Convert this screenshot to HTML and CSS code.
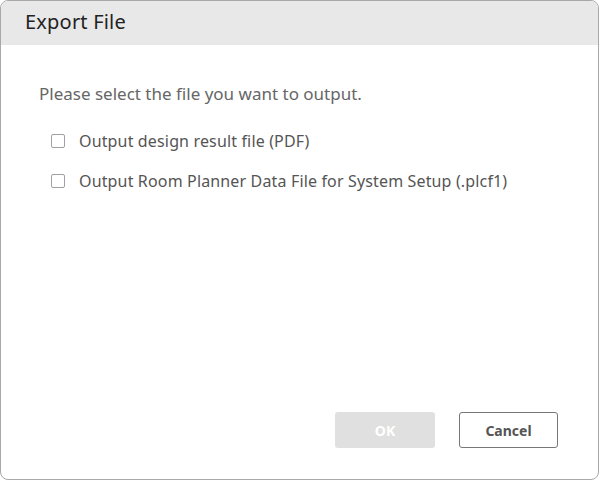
FILE: index.html
```html
<!DOCTYPE html>
<html lang="en">
<head>
  <meta charset="UTF-8" />
  <title>Export File</title>
  <link rel="stylesheet" href="styles.css">
</head>
<body>
  <div class="dialog">
    <div class="dialog-header">Export File</div>
    <div class="dialog-body">
      <p class="intro">Please select the file you want to output.</p>
      <label class="option"><span class="box"></span>Output design result file (PDF)</label>
      <label class="option"><span class="box"></span>Output Room Planner Data File for System Setup (.plcf1)</label>
    </div>
    <div class="dialog-footer">
      <button class="btn btn-ok" disabled>OK</button>
      <button class="btn btn-cancel">Cancel</button>
    </div>
  </div>
</body>
</html>
```

FILE: styles.css
```css
/* ===== Dialog ===== */
body {
  margin: 0;
  font-family: "Noto Sans", "Open Sans", sans-serif;
  background: #fff;
}
.dialog {
  box-sizing: border-box;
  width: 599px;
  height: 480px;
  border: 1px solid #a8a8a8;
  border-radius: 8px;
  overflow: hidden;
  display: flex;
  flex-direction: column;
  background: #fff;
}
.dialog-header {
  height: 44px;
  background: #e8e8e8;
  padding-left: 24px;
  font-size: 20px;
  letter-spacing: 0.2px;
  line-height: 42px;
  color: #222;
}
.dialog-body {
  flex: 1;
  padding: 38px 0 0 38px;
}
.intro {
  margin: 0 0 26px;
  font-size: 17px;
  line-height: 22px;
  color: #666;
}
.option {
  display: flex;
  align-items: center;
  margin-left: 12px;
  height: 20px;
  margin-bottom: 20px;
  font-size: 16px;
  letter-spacing: 0.15px;
  color: #555;
}
.box {
  box-sizing: border-box;
  width: 14px;
  height: 14px;
  border: 1px solid #a0a0a0;
  border-radius: 2px;
  margin-right: 14px;
}
.dialog-footer {
  display: flex;
  justify-content: flex-end;
  gap: 24px;
  padding: 0 40px 31px 0;
}
.btn {
  font-family: inherit;
  width: 100px;
  height: 36px;
  font-size: 14px;
  font-weight: bold;
  border-radius: 3px;
}
.btn-ok {
  background: #e0e0e0;
  border: none;
  color: #fff;
}
.btn-cancel {
  width: 99px;
  background: #fff;
  border: 1px solid #777;
  color: #555;
}
```
